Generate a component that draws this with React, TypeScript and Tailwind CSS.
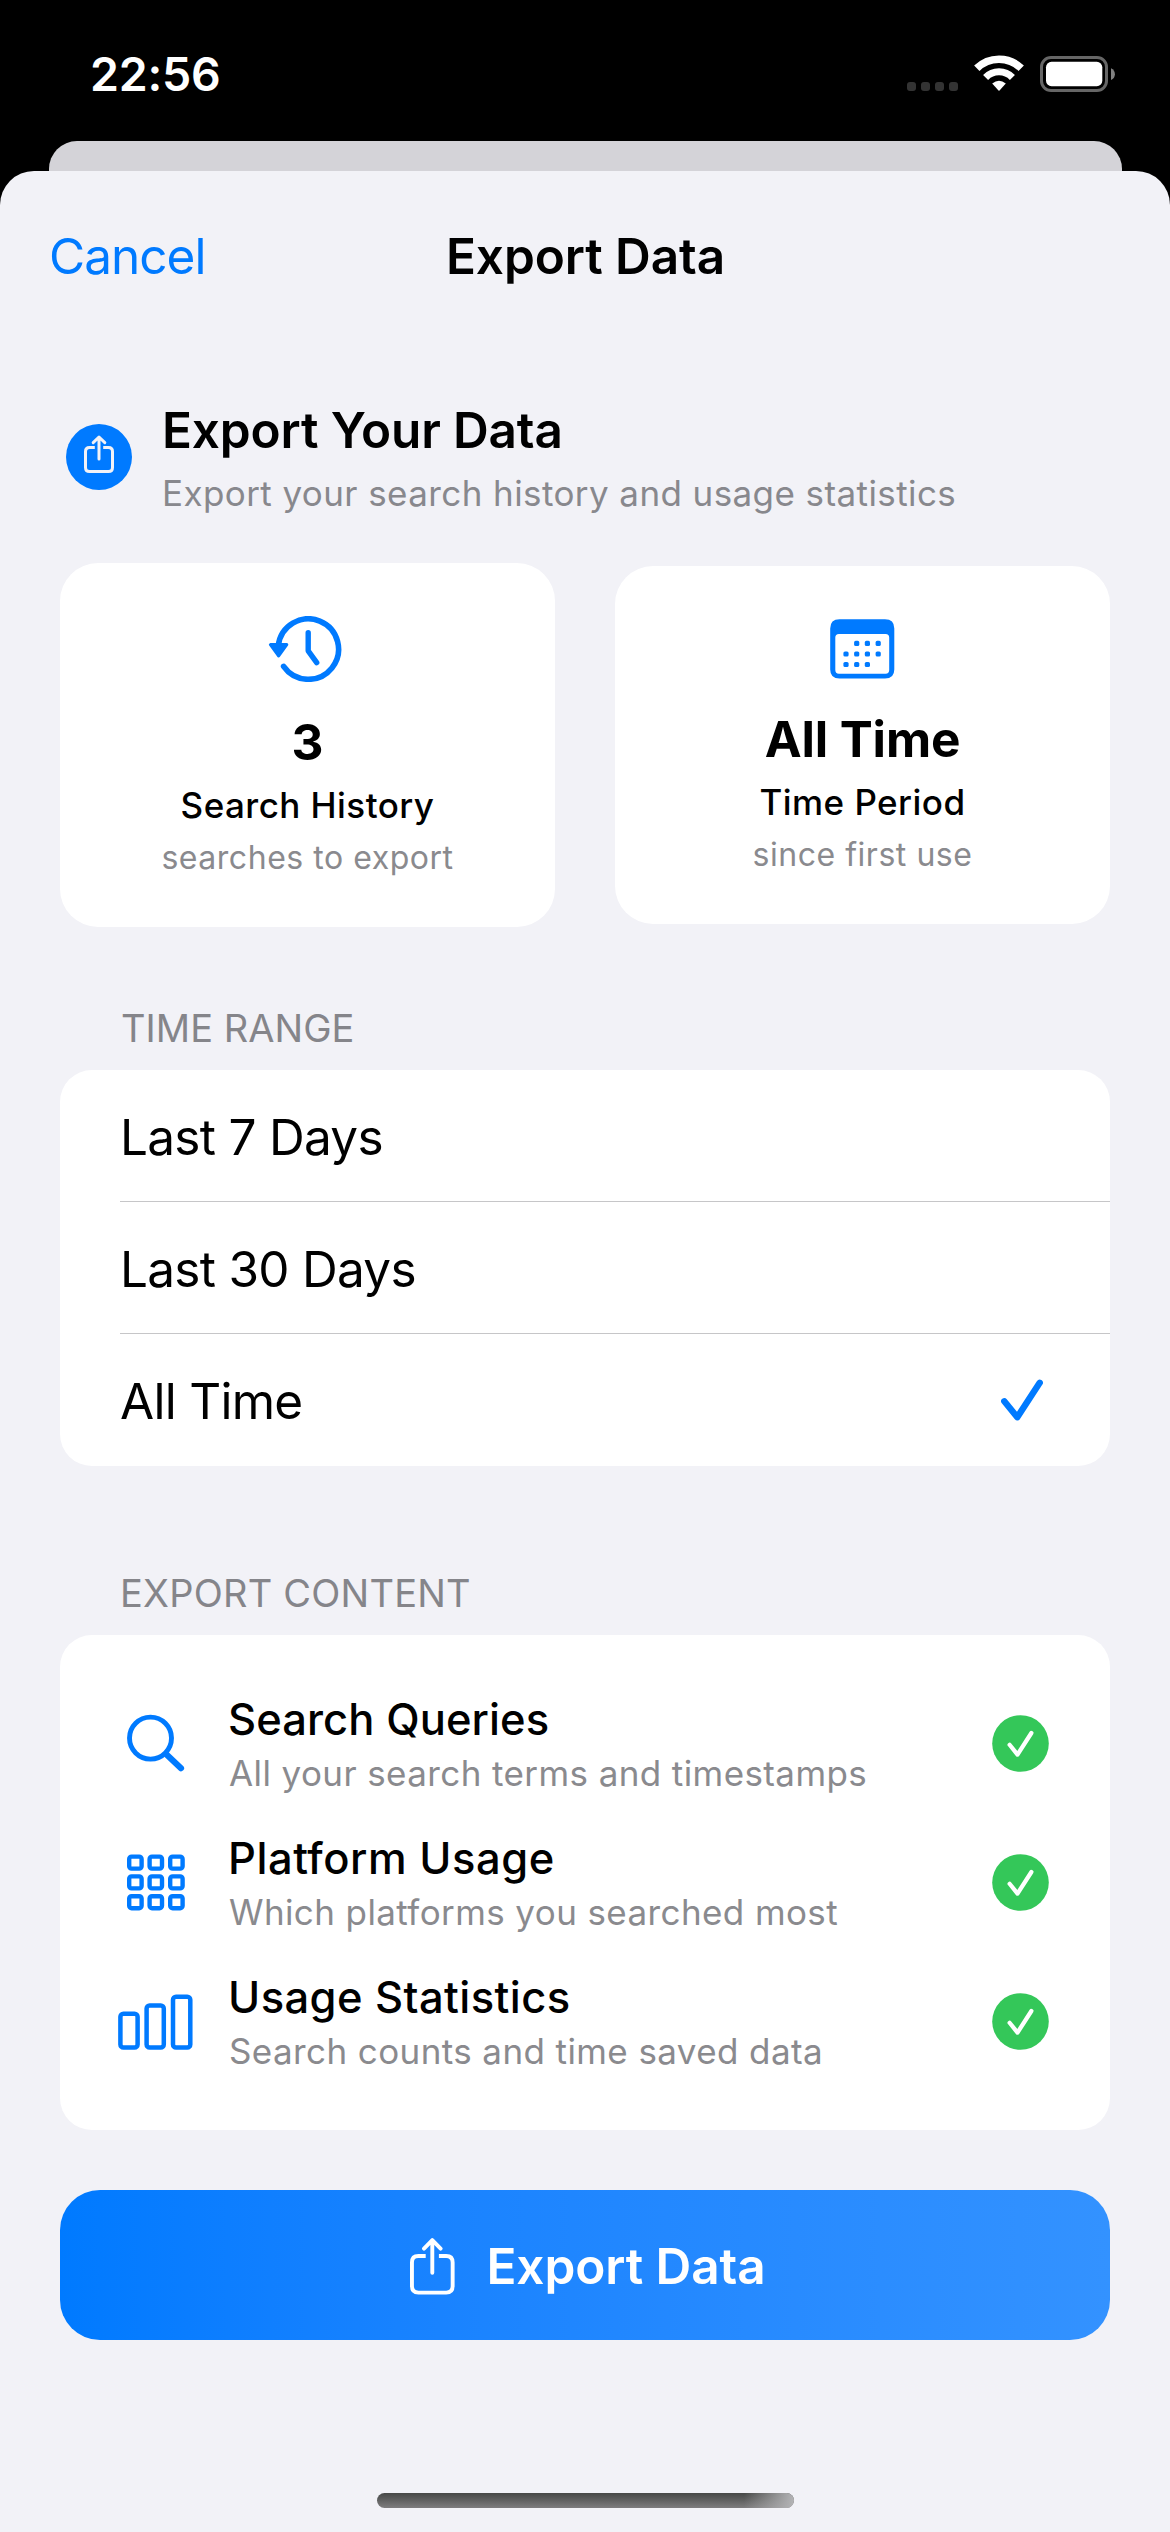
import type { ReactNode } from "react";

function StatusBar() {
  return (
    <div className="flex h-[141px] shrink-0 items-center justify-between pt-[7px] pr-[54px] pl-[90px]">
      <span className="text-[46.5px] leading-[60px] font-semibold tracking-[-0.25px] text-white">22:56</span>
      <div className="flex h-[38px] items-start">
        <div className="mb-[2px] flex gap-[5px] self-end">
          <i className="size-[9px] rounded-[3px] bg-[#333333]" />
          <i className="size-[9px] rounded-[3px] bg-[#333333]" />
          <i className="size-[9px] rounded-[3px] bg-[#333333]" />
          <i className="size-[9px] rounded-[3px] bg-[#333333]" />
        </div>
        <svg className="ml-4" width="50" height="38" viewBox="0 0 50 38" fill="none" stroke="#fff">
          <path d="M2.8 13.3A31.6 31.6 0 0 1 47.2 13.3" strokeWidth="7.6" />
          <path d="M11.6 22.5A18.6 18.6 0 0 1 38.4 22.5" strokeWidth="7" />
          <path d="M18.2 28.6Q25 22.8 31.8 28.6L25.5 35.6Q25 36 24.5 35.6Z" fill="#fff" stroke="none" />
        </svg>
        <svg className="ml-4" width="76" height="38" viewBox="0 0 76 38">
          <rect x="1.5" y="2.5" width="65" height="33" rx="9.5" fill="none" stroke="#666" strokeWidth="3" />
          <rect x="6" y="6.8" width="56.3" height="24.4" rx="5.5" fill="#fff" />
          <path d="M71 13.3C76.2 15.5 76.2 22.8 71 25Z" fill="#808080" />
        </svg>
      </div>
    </div>
  );
}

function ShareBadge() {
  return (
    <svg className="ml-[6px] shrink-0" width="66" height="66" viewBox="0 0 66 66" fill="none">
      <circle cx="33" cy="33" r="33" fill="#007aff" />
      <g stroke="#f2f2f7" strokeWidth="3">
        <path d="M28.8 23.6H23.5Q19.5 23.6 19.5 27.6V43.6Q19.5 47.6 23.5 47.6H42.5Q46.5 47.6 46.5 43.6V27.6Q46.5 23.6 42.5 23.6H37.2" />
        <path d="M33 13.6V35M27.2 18.6L33 13L38.8 18.6" strokeLinecap="round" strokeLinejoin="round" />
      </g>
    </svg>
  );
}

function ShareIcon() {
  return (
    <svg className="shrink-0" width="45" height="57" viewBox="0 0 45 57" fill="none" stroke="#fff" strokeWidth="3.9">
      <path d="M15.7 18H8.4Q1.95 18 1.95 24.5V48Q1.95 54.6 8.4 54.6H36.2Q42.65 54.6 42.65 48V24.5Q42.65 18 36.2 18H28.9" />
      <path d="M22.3 3V34.8M14 10.6L22.3 2.1L30.6 10.6" strokeLinecap="round" strokeLinejoin="round" />
    </svg>
  );
}

function HistoryIcon() {
  return (
    <svg width="80" height="66" viewBox="0 0 80 66" fill="none" stroke="#007aff" strokeLinecap="round" strokeLinejoin="round">
      <path d="M10.3 30A30.2 30.2 0 1 1 15.6 50.4" strokeWidth="5.6" />
      <path d="M40.2 16.8V34.8L48.7 46.6" strokeWidth="5.4" />
      <path d="M2.4 28.6H18.8L10.7 40Z" fill="#007aff" strokeWidth="3" />
    </svg>
  );
}

const calendarDots: [number, number][] = [
  [26.7, 24.4], [37.4, 24.4], [48.2, 24.4],
  [16, 35], [26.7, 35], [37.4, 35], [48.2, 35],
  [16, 45.5], [26.7, 45.5], [37.4, 45.5],
];

function CalendarIcon() {
  return (
    <svg width="65" height="60" viewBox="0 0 65 60" fill="#007aff">
      <path fillRule="evenodd" d="M9.5 0.3H55Q64.3 0.3 64.3 9.5V50.5Q64.3 59.6 55 59.6H9.5Q0.2 59.6 0.2 50.5V9.5Q0.2 0.3 9.5 0.3ZM8.9 15Q5.3 15 5.3 18.6V51Q5.3 54.7 8.9 54.7H55.6Q59.2 54.7 59.2 51V18.6Q59.2 15 55.6 15Z" />
      {calendarDots.map(([x, y]) => (
        <rect key={`${x}-${y}`} x={x - 2.6} y={y - 2.6} width="5.2" height="5.2" rx="1.6" />
      ))}
    </svg>
  );
}

function SearchIcon() {
  return (
    <svg width="76" height="60" viewBox="0 0 76 60" fill="none" stroke="#007aff" strokeLinecap="round">
      <circle cx="32.5" cy="25.1" r="21" strokeWidth="4.9" />
      <path d="M48 41L63 55.2" strokeWidth="6.2" />
    </svg>
  );
}

function GridIcon() {
  return (
    <svg width="76" height="60" viewBox="0 0 76 60" fill="none" stroke="#007aff" strokeWidth="4.4">
      {[4.6, 24.4, 44.2].map((y) =>
        [11.2, 31.6, 52.2].map((x) => <rect key={`${x}-${y}`} x={x} y={y} width="12.4" height="12" rx="2.4" />),
      )}
    </svg>
  );
}

function BarsIcon() {
  return (
    <svg width="76" height="60" viewBox="0 0 76 60" fill="none" stroke="#007aff" strokeWidth="4.5">
      <rect x="2.4" y="22.8" width="17.2" height="33.7" rx="3" />
      <rect x="28.6" y="14.4" width="17.2" height="42.1" rx="3" />
      <rect x="55" y="5.8" width="17.3" height="50.7" rx="3" />
    </svg>
  );
}

function StatCard({ icon, value, label, note, className }: { icon: ReactNode; value: string; label: string; note: string; className: string }) {
  return (
    <div className={`flex flex-col items-center rounded-[38px] bg-white pt-[53px] ${className}`}>
      {icon}
      <div className="mt-[30px] text-[49.5px] leading-[60px] font-bold tracking-[-0.12px] text-black">{value}</div>
      <div className="mt-[12px] text-[35px] leading-[42px] font-medium tracking-[0.45px] text-black">{label}</div>
      <div className="mt-[13px] text-[32px] leading-[38px] tracking-[0.53px] text-[#8a8a8e]">{note}</div>
    </div>
  );
}

const ranges = [
  { label: "Last 7 Days", selected: false },
  { label: "Last 30 Days", selected: false },
  { label: "All Time", selected: true },
];

const contents = [
  { icon: <SearchIcon />, title: "Search Queries", titleClass: "tracking-[0.08px]", note: "All your search terms and timestamps" },
  { icon: <GridIcon />, title: "Platform Usage", titleClass: "tracking-[0.54px]", note: "Which platforms you searched most" },
  { icon: <BarsIcon />, title: "Usage Statistics", titleClass: "tracking-[0.43px]", note: "Search counts and time saved data" },
];

export default function App() {
  return (
    <div className="flex h-[2532px] w-[1170px] flex-col overflow-hidden bg-black font-['Inter',sans-serif]">
      <StatusBar />
      <div className="mx-[48.5px] h-[30px] shrink-0 rounded-t-[28px] bg-[#d4d3d8]" />
      <div className="flex flex-1 flex-col rounded-t-[34px] bg-[#f2f2f7]">
        <header className="grid h-[169px] shrink-0 grid-cols-[1fr_auto_1fr] items-center pl-[49px] pr-[48px] text-[49.5px] leading-[60px]">
          <span className="tracking-[-0.99px] text-[#007aff]">Cancel</span>
          <h1 className="font-semibold tracking-[-0.07px] text-black">Export Data</h1>
        </header>

        <main className="flex flex-1 flex-col px-[60px] pt-[60px]">
          <section className="flex items-center gap-[30px]">
            <ShareBadge />
            <div>
              <h2 className="text-[49.5px] leading-[60px] font-semibold tracking-[-0.14px] text-black">Export Your Data</h2>
              <p className="mt-[12px] text-[35px] leading-[42px] tracking-[0.41px] text-[#88888d]">
                Export your search history and usage statistics
              </p>
            </div>
          </section>

          <section className="mt-[49px] grid h-[364px] grid-cols-2 items-center gap-[60px]">
            <StatCard className="h-[364px]" icon={<HistoryIcon />} value="3" label="Search History" note="searches to export" />
            <StatCard className="h-[358px]" icon={<CalendarIcon />} value="All Time" label="Time Period" note="since first use" />
          </section>

          <h3 className="mt-[78px] pl-[61px] text-[38px] leading-[46px] tracking-[0.03px] text-[#85858a]">TIME RANGE</h3>
          <section className="mt-[19px] rounded-[32px] bg-white pl-[60px]">
            {ranges.map((range, index) => (
              <div
                key={range.label}
                className={`flex h-[132px] items-center justify-between pt-[2px] pr-[67px] ${index < 2 ? "border-b border-[#c6c6c8]" : ""}`}
              >
                <span className="text-[49.5px] leading-[60px] tracking-[-0.72px] text-black">{range.label}</span>
                {range.selected && (
                  <svg width="42" height="44" viewBox="0 0 42 44" fill="none" stroke="#007aff" strokeWidth="6.4" strokeLinecap="round" strokeLinejoin="round">
                    <path d="M3.3 22.3L16.3 38.2L38.7 3.8" />
                  </svg>
                )}
              </div>
            ))}
          </section>

          <h3 className="mt-[104px] pl-[60px] text-[38px] leading-[46px] tracking-[0.22px] text-[#85858a]">EXPORT CONTENT</h3>
          <section className="mt-[19px] flex h-[495px] flex-col gap-[37px] rounded-[32px] bg-white pt-[57px] pr-[61px] pl-[58px]">
            {contents.map((item) => (
              <div key={item.title} className="flex h-[102px] items-center">
                {item.icon}
                <div className="ml-[34px] flex-1">
                  <div className={`text-[43.5px] leading-[54px] font-medium text-black ${item.titleClass}`}>{item.title}</div>
                  <div className="mt-[6px] pl-px text-[35px] leading-[42px] tracking-[0.4px] text-[#8a8a8e]">{item.note}</div>
                </div>
                <svg width="57" height="57" viewBox="0 0 57 57" fill="none">
                  <circle cx="28.5" cy="28.5" r="28.3" fill="#34c759" />
                  <path d="M17.6 29.8L25.5 39.6L39.4 18" stroke="#fff" strokeWidth="4.2" strokeLinecap="round" strokeLinejoin="round" />
                </svg>
              </div>
            ))}
          </section>

          <button className="mt-[60px] flex h-[150px] shrink-0 items-center justify-center gap-[31px] rounded-[40px] bg-linear-to-r from-[#007aff] to-[#3392ff] pt-[2px] pl-[6px] text-[49.5px] leading-[60px] font-semibold tracking-[-0.07px] text-white">
            <ShareIcon />
            Export Data
          </button>

          <div className="mt-auto mb-[24px] h-[15px] w-[417px] overflow-hidden self-center rounded-full bg-linear-to-b from-[#474847] to-[#7e7d7e]">
            <div className="ml-auto h-full w-[50px] bg-linear-to-r from-transparent to-[#b4b4b6]" />
          </div>
        </main>
      </div>
    </div>
  );
}
